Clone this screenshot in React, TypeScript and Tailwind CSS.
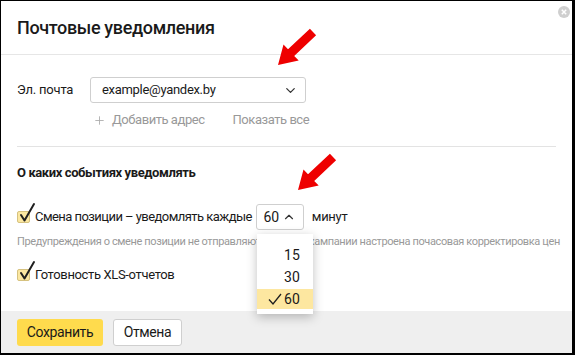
import { ChevronDown, ChevronUp, Plus } from 'lucide-react';

const Checkbox = () => (
    <span className="relative inline-block w-[13px] h-[12px] shrink-0 rounded-[2px] border border-[#d6c27f] bg-[#fbe7a1]">
        <svg className="absolute left-[1px] top-[-10px] overflow-visible" width="17" height="20" viewBox="0 0 17 20">
            <polyline points="2,13 5.5,18.5 15,2" fill="none" stroke="#1f1f1f" strokeWidth="2" strokeLinecap="round" strokeLinejoin="round" />
        </svg>
    </span>
);

const App = () => {
    return (
        <div
            className="relative w-[575px] h-[355px] flex flex-col bg-white border-t border-l border-r-[3px] border-b-2 border-black text-[#1a1a1a] overflow-hidden"
            style={{ fontFamily: 'Roboto, "Open Sans", sans-serif' }}
        >
            {/* Header */}
            <div className="h-[54px] shrink-0 flex items-center px-[16px] border-b border-[#e6e6e6]">
                <h1 className="text-[18px] font-medium tracking-[-0.35px]">Почтовые уведомления</h1>
            </div>
            <div className="absolute right-[2px] top-[5px] w-[12px] h-[12px] rounded-full bg-[#cfcfcf] flex items-center justify-center">
                <svg width="6" height="6" viewBox="0 0 6 6">
                    <path d="M0.8 0.8L5.2 5.2M5.2 0.8L0.8 5.2" stroke="#fff" strokeWidth="1.5" />
                </svg>
            </div>

            {/* Email */}
            <div className="px-[16px]">
                <div className="mt-[22px] flex items-center">
                    <span className="w-[73px] text-[13px] tracking-[-0.2px]">Эл. почта</span>
                    <div className="w-[216px] h-[26px] flex items-center justify-between pl-[11px] pr-[7px] border border-[#cfcfcf] rounded-[3px] text-[13px] tracking-[-0.3px]">
                        <span>example@yandex.by</span>
                        <ChevronDown size={15} strokeWidth={2} color="#333" />
                    </div>
                </div>
                <div className="mt-[8px] ml-[73px] h-[18px] flex items-center text-[13px] tracking-[-0.45px] text-[#999]">
                    <Plus size={13} strokeWidth={1.6} className="ml-[3px] mr-[6px]" color="#aaa" />
                    <span>Добавить адрес</span>
                    <span className="ml-[28px]">Показать все</span>
                </div>
                <div className="mt-[17px] border-t border-[#e3e3e3]" />

                {/* Events */}
                <h2 className="mt-[17px] h-[18px] leading-[18px] text-[13px] font-bold tracking-[-0.4px]">О каких событиях уведомлять</h2>
                <div className="mt-[22px] flex items-center">
                    <Checkbox />
                    <span className="ml-[5px] text-[13px] tracking-[-0.55px]">Смена позиции – уведомлять каждые</span>
                    <div className="relative ml-[4px]">
                        <div className="w-[48px] h-[26px] flex items-center justify-center gap-[3px] border border-[#cfcfcf] rounded-[3px] text-[14px] bg-white">
                            <span>60</span>
                            <ChevronUp size={14} strokeWidth={2} color="#333" />
                        </div>
                        <div className="absolute left-[1px] top-[30px] w-[56px] pt-[10px] pb-[5px] bg-white shadow-[0_3px_10px_rgba(0,0,0,0.25)] z-10 text-[14px]">
                            <div className="h-[22px] flex items-center justify-end pr-[13px]">15</div>
                            <div className="h-[22px] flex items-center justify-end pr-[13px]">30</div>
                            <div className="h-[20px] mt-[1px] flex items-center justify-end gap-[2px] pr-[13px] bg-[#fde7a0]">
                                <svg width="14" height="12" viewBox="0 0 14 12">
                                    <polyline points="1,6.5 5,11 13,1" fill="none" stroke="#1f1f1f" strokeWidth="1.3" />
                                </svg>
                                <span>60</span>
                            </div>
                        </div>
                    </div>
                    <span className="ml-[8px] text-[13px] tracking-[-0.3px]">минут</span>
                </div>
                <p className="mt-[5px] h-[14px] leading-[14px] text-[11px] tracking-[-0.38px] text-[#999] whitespace-nowrap">
                    Предупреждения о смене позиции не отправляются, если в кампании настроена почасовая корректировка цен
                </p>
                <div className="mt-[16px] flex items-center">
                    <Checkbox />
                    <span className="ml-[5px] text-[13px] tracking-[-0.35px]">Готовность XLS-отчетов</span>
                </div>
            </div>

            {/* Footer */}
            <div className="mt-auto h-[42px] flex items-center gap-[10px] px-[16px] bg-[#efefef]">
                <button className="w-[86px] h-[27px] rounded-[3px] bg-[#ffdb4d] text-[14px] tracking-[-0.4px]">Сохранить</button>
                <button className="w-[69px] h-[27px] rounded-[3px] bg-white border border-[#cfcfcf] text-[14px] tracking-[-0.4px]">Отмена</button>
            </div>

            {/* Annotation arrows */}
            <svg className="absolute left-[-1px] top-[-1px] pointer-events-none z-20" width="575" height="355">
                <polygon fill="#ee0000" points="309.9,28.7 288,49.3 283.5,44.6 278,65 298.7,60.6 294.2,55.9 316.1,35.3" />
                <g transform="translate(20,125)">
                    <polygon fill="#ee0000" points="309.9,28.7 288,49.3 283.5,44.6 278,65 298.7,60.6 294.2,55.9 316.1,35.3" />
                </g>
            </svg>
        </div>
    );
};

export default App;
